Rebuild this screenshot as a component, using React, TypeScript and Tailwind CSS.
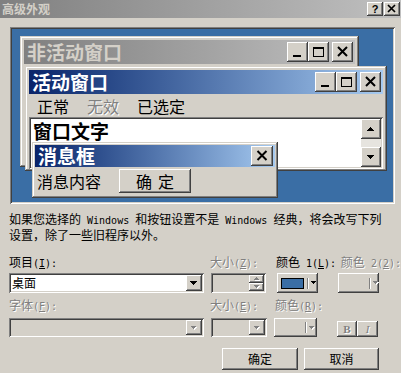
import React from "react";

const RAISED = "shadow-[inset_-1px_-1px_#404040,inset_1px_1px_#ffffff,inset_-2px_-2px_#808080]";
const FRAME = "shadow-[inset_-1px_-1px_#404040,inset_1px_1px_#d4d0c8,inset_-2px_-2px_#808080,inset_2px_2px_#ffffff]";
const SUNKEN = "shadow-[inset_1px_1px_#808080,inset_-1px_-1px_#ffffff,inset_2px_2px_#404040,inset_-2px_-2px_#d4d0c8]";
const DIS = "text-[#808080] [text-shadow:1px_1px_0_#ffffff]";

function L({ children }: { children: React.ReactNode }) {
  return <span className="font-['DejaVu_Sans_Mono',monospace] text-[10px]">{children}</span>;
}

function Arrow({ dir = "down", disabled = false, size = 4 }: { dir?: "up" | "down"; disabled?: boolean; size?: number }) {
  const w = size * 2 - 1;
  const rows = Array.from({ length: size }, (_, i) => i);
  const rect = (i: number, d: number, fill: string) => {
    const y = dir === "down" ? i : size - 1 - i;
    return <rect key={`${d}-${i}`} x={i + d} y={y + d} width={w - 2 * i} height={1} fill={fill} />;
  };
  return (
    <svg width={w + 1} height={size + 1} shapeRendering="crispEdges" className="block">
      {disabled && rows.map((i) => rect(i, 1, "#ffffff"))}
      {rows.map((i) => rect(i, 0, disabled ? "#808080" : "#000000"))}
    </svg>
  );
}

function CapBtn({ kind, className = "" }: { kind: "min" | "max" | "close"; className?: string }) {
  return (
    <div className={`${RAISED} bg-[#d4d0c8] ${className}`}>
      <svg viewBox="0 0 21 20" className="w-full h-full block">
        {kind === "min" && <rect x="6" y="13" width="8" height="2" fill="#000" shapeRendering="crispEdges" />}
        {kind === "max" && (
          <g shapeRendering="crispEdges">
            <rect x="5.5" y="5.5" width="10" height="9" stroke="#000" fill="none" />
            <rect x="5" y="5" width="11" height="2" fill="#000" />
          </g>
        )}
        {kind === "close" && <path d="M6 5 L15 14 M15 5 L6 14" stroke="#000" strokeWidth="2" fill="none" />}
      </svg>
    </div>
  );
}

function Combo({ className, disabled = false, children }: { className: string; disabled?: boolean; children?: React.ReactNode }) {
  return (
    <div className={`${SUNKEN} p-[2px] flex ${className}`}>
      <div className={`flex-1 flex items-center pl-[1px] ${disabled ? "bg-[#d4d0c8]" : "bg-white"}`}>{children}</div>
      <div className={`${RAISED} bg-[#d4d0c8] w-[16px] flex items-center justify-center`}>
        <Arrow disabled={disabled} size={disabled ? 3 : 4} />
      </div>
    </div>
  );
}

function ColorBtn({ className, swatch = false, swW }: { className: string; swatch?: boolean; swW: string }) {
  return (
    <div className={`${RAISED} bg-[#d4d0c8] flex items-center pl-[4px] ${className}`}>
      <div className={`${swW} h-[11px] ${swatch ? "bg-[#3a6ea5] border border-black" : ""}`} />
      <div className="ml-[3px] w-[2px] h-[11px] border-l border-l-[#808080] border-r border-r-white" />
      <div className="ml-[2px]">
        <Arrow disabled={!swatch} size={3} />
      </div>
    </div>
  );
}

function Preview() {
  return (
    <div className={`mt-[9px] ml-[10px] w-[385px] h-[177px] p-[2px] ${SUNKEN}`}>
      <div className="relative w-full h-full bg-[#3a6ea5] overflow-hidden">
        {/* inactive window */}
        <div className={`absolute left-[8px] top-[7px] w-[339px] h-[131px] bg-[#d4d0c8] p-[4px] ${FRAME}`}>
          <div className="h-[24px] flex items-center bg-linear-to-r from-[#808080] to-[#c0c0c0] pl-[3px] pr-[2px]">
            <span className="text-[19px] leading-[24px] font-bold text-[#d4d0c8]">非活动窗口</span>
            <div className="ml-auto flex items-center">
              <CapBtn kind="min" className="w-[21px] h-[20px]" />
              <CapBtn kind="max" className="w-[21px] h-[20px]" />
              <CapBtn kind="close" className="w-[21px] h-[20px] ml-[3px]" />
            </div>
          </div>
        </div>

        {/* active window */}
        <div className={`absolute left-[13px] top-[37px] w-[362px] h-[105px] bg-[#d4d0c8] pt-[4px] px-[4px] pb-[2px] flex flex-col ${FRAME}`}>
          <div className="h-[24px] shrink-0 flex items-center bg-linear-to-r from-[#0a246a] to-[#a6caf0] pl-[3px] pr-[2px]">
            <span className="text-[19px] leading-[24px] font-bold text-white">活动窗口</span>
            <div className="ml-auto flex items-center">
              <CapBtn kind="min" className="w-[21px] h-[20px]" />
              <CapBtn kind="max" className="w-[21px] h-[20px]" />
              <CapBtn kind="close" className="w-[21px] h-[20px] ml-[3px]" />
            </div>
          </div>
          <div className="h-[23px] shrink-0 flex items-center pl-[8px] gap-[18px] text-[16px] leading-[20px]">
            <span>正常</span>
            <span className={DIS}>无效</span>
            <span>已选定</span>
          </div>
          <div className={`flex-1 flex p-[2px] ${SUNKEN}`}>
            <div className="flex-1 bg-white pl-[2px] pt-[1px] text-[19px] leading-[22px] font-bold">窗口文字</div>
            <div className="w-[20px] flex flex-col bg-[#e6e4df]">
              <div className={`${RAISED} bg-[#d4d0c8] h-[20px] flex items-center justify-center`}>
                <Arrow dir="up" size={4} />
              </div>
              <div className="flex-1" />
              <div className={`${RAISED} bg-[#d4d0c8] h-[20px] flex items-center justify-center`}>
                <Arrow dir="down" size={4} />
              </div>
            </div>
          </div>
        </div>

        {/* message box */}
        <div className={`absolute left-[20px] top-[113px] w-[246px] h-[56px] bg-[#d4d0c8] p-[3px] flex flex-col ${FRAME}`}>
          <div className="h-[22px] shrink-0 flex items-center bg-linear-to-r from-[#0a246a] to-[#a6caf0] pl-[3px] pr-[2px]">
            <span className="text-[19px] leading-[22px] font-bold text-white">消息框</span>
            <CapBtn kind="close" className="ml-auto w-[22px] h-[20px]" />
          </div>
          <div className="flex-1 flex items-center pl-[2px] text-[16px] leading-[20px]">
            <span>消息内容</span>
            <div className={`${RAISED} bg-[#d4d0c8] ml-[18px] w-[72px] h-[24px] flex items-center justify-center tracking-[6px] pl-[6px]`}>
              确定
            </div>
          </div>
        </div>
      </div>
    </div>
  );
}

export default function App() {
  return (
    <div className="w-[401px] h-[373px] overflow-hidden bg-[#d4d0c8] text-[12px] leading-[14px] text-black font-['Noto_Sans_CJK_SC',sans-serif] flex flex-col">
      {/* title bar */}
      <div className="h-[18px] shrink-0 flex items-center bg-linear-to-r from-[#808080] to-[#c0c0c0] pl-[2px] pr-[1px]">
        <span className="font-bold text-[#d4d0c8] text-[12px] leading-[18px]">高级外观</span>
        <div className="ml-auto flex items-center gap-[1px]">
          <div className={`${RAISED} bg-[#d4d0c8] w-[16px] h-[14px] flex items-center justify-center`}>
            <span className="font-['Liberation_Sans',sans-serif] font-bold text-[11px] leading-[11px]">?</span>
          </div>
          <div className={`${RAISED} bg-[#d4d0c8] w-[16px] h-[14px]`}>
            <svg viewBox="0 0 16 14" className="w-full h-full block">
              <path d="M4 3 L11 10 M11 3 L4 10" stroke="#000" strokeWidth="1.7" fill="none" />
            </svg>
          </div>
        </div>
      </div>

      <Preview />

      <p className="mt-[8px] ml-[9px] leading-[14px] whitespace-nowrap">
        如果您选择的<L> Windows </L>和按钮设置不是<L> Windows </L>经典，将会改写下列
        <br />
        设置，除了一些旧程序以外。
      </p>

      {/* row 1 labels */}
      <div className="mt-[13px] h-[14px] flex whitespace-nowrap">
        <div className="w-[210px] pl-[9px]">
          项目<L>(<u>I</u>):</L>
        </div>
        <div className={`w-[66px] ${DIS}`}>
          大小<L>(<u>Z</u>):</L>
        </div>
        <div className="w-[65px]">
          颜色<L> 1(<u>L</u>):</L>
        </div>
        <div className={DIS}>
          颜色<L> 2(<u>2</u>):</L>
        </div>
      </div>

      {/* row 1 controls */}
      <div className="mt-[4px] flex items-start pl-[9px]">
        <Combo className="w-[195px] h-[20px]">
          <span>桌面</span>
        </Combo>
        <div className={`${SUNKEN} ml-[7px] w-[55px] h-[20px] p-[2px] flex`}>
          <div className="flex-1 bg-[#d4d0c8]" />
          <div className="w-[15px] flex flex-col">
            <div className={`${RAISED} bg-[#d4d0c8] flex-1 flex items-center justify-center`}>
              <Arrow dir="up" disabled size={3} />
            </div>
            <div className={`${RAISED} bg-[#d4d0c8] flex-1 flex items-center justify-center`}>
              <Arrow dir="down" disabled size={3} />
            </div>
          </div>
        </div>
        <ColorBtn className="ml-[11px] w-[41px] h-[20px]" swatch swW="w-[23px]" />
        <ColorBtn className="ml-[20px] w-[41px] h-[20px]" swW="w-[24px]" />
      </div>

      {/* row 2 labels */}
      <div className="mt-[5px] h-[14px] flex whitespace-nowrap">
        <div className={`w-[210px] pl-[9px] ${DIS}`}>
          字体<L>(<u>F</u>):</L>
        </div>
        <div className={`w-[65px] ${DIS}`}>
          大小<L>(<u>E</u>):</L>
        </div>
        <div className={DIS}>
          颜色<L>(<u>R</u>):</L>
        </div>
      </div>

      {/* row 2 controls */}
      <div className="mt-[6px] flex items-end pl-[9px]">
        <Combo className="w-[195px] h-[19px]" disabled />
        <Combo className="ml-[7px] w-[56px] h-[19px]" disabled />
        <ColorBtn className="ml-[7px] w-[43px] h-[19px]" swW="w-[24px]" />
        <div className={`${RAISED} bg-[#d4d0c8] ml-[20px] w-[20px] h-[16px] flex items-center justify-center`}>
          <span className={`font-['Liberation_Serif',serif] font-bold text-[11px] leading-[11px] ${DIS}`}>B</span>
        </div>
        <div className={`${RAISED} bg-[#d4d0c8] w-[21px] h-[16px] flex items-center justify-center`}>
          <span className={`font-['Liberation_Serif',serif] italic text-[11px] leading-[11px] ${DIS}`}>I</span>
        </div>
      </div>

      {/* buttons */}
      <div className="mt-[11px] flex justify-end pr-[22px] gap-[6px]">
        <div className={`${RAISED} bg-[#d4d0c8] w-[76px] h-[22px] flex items-center justify-center`}>确定</div>
        <div className={`${RAISED} bg-[#d4d0c8] w-[75px] h-[22px] flex items-center justify-center`}>取消</div>
      </div>
    </div>
  );
}
